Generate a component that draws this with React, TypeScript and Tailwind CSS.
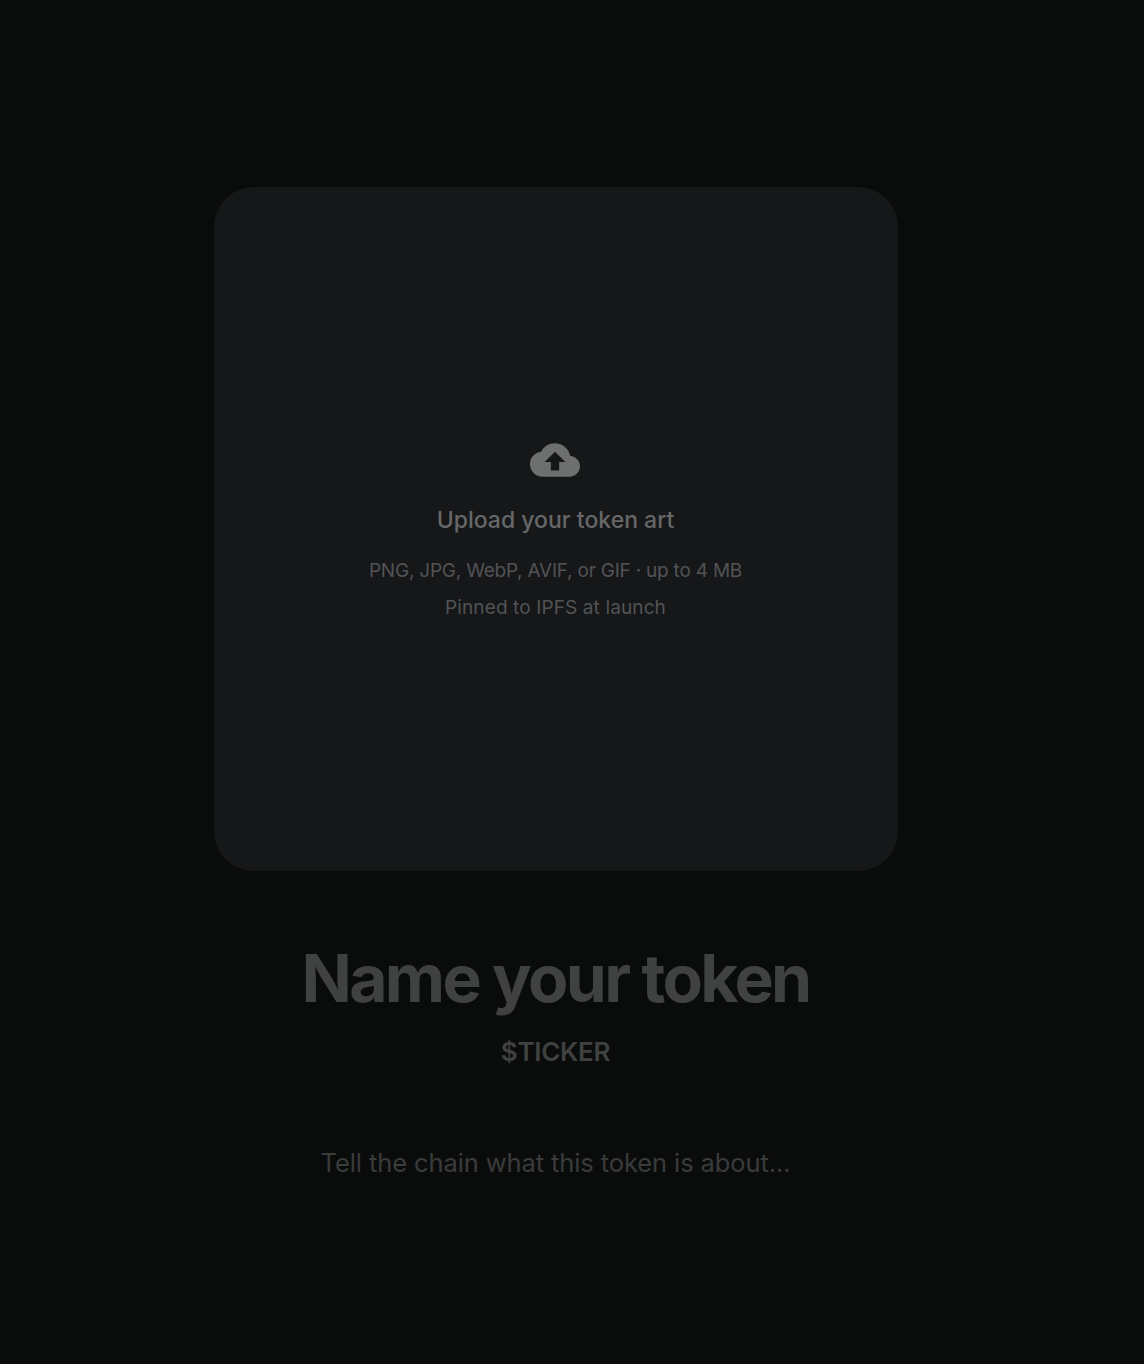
import { MdCloudUpload } from "react-icons/md";

export default function App() {
  return (
    <div className="min-h-[1364px] bg-[#0a0c0c] pr-[33px] pt-[187px] font-['Inter','Liberation_Sans',sans-serif]">
      <div className="mx-auto flex w-[684px] flex-col items-center">
        <div className="flex h-[684px] w-[684px] flex-col items-center rounded-[40px] bg-[#161719] pt-[248px]">
          <MdCloudUpload className="mr-px h-[50px] w-[50px] text-[#6e706f]" />
          <p className="mt-[20px] text-[23px] leading-[30px] font-medium text-[#666768]">Upload your token art</p>
          <p className="mt-[21px] text-[19px] leading-[30px] tracking-[-0.22px] text-[#525355]">PNG, JPG, WebP, AVIF, or GIF · up to 4 MB</p>
          <p className="mt-[7px] text-[19px] leading-[30px] tracking-[0.12px] text-[#525355]">Pinned to IPFS at launch</p>
        </div>
        <h1 className="mt-[66px] text-[66px] leading-[82px] font-bold tracking-[-0.04em] text-[#404141]">Name your token</h1>
        <p className="mt-[15px] text-[26px] leading-[36px] font-semibold tracking-[-0.3px] text-[#404141]">$TICKER</p>
        <p className="mt-[75px] text-[25.5px] leading-[36px] tracking-[-0.1px] text-[#3a3b3b]">Tell the chain what this token is about...</p>
      </div>
    </div>
  );
}
